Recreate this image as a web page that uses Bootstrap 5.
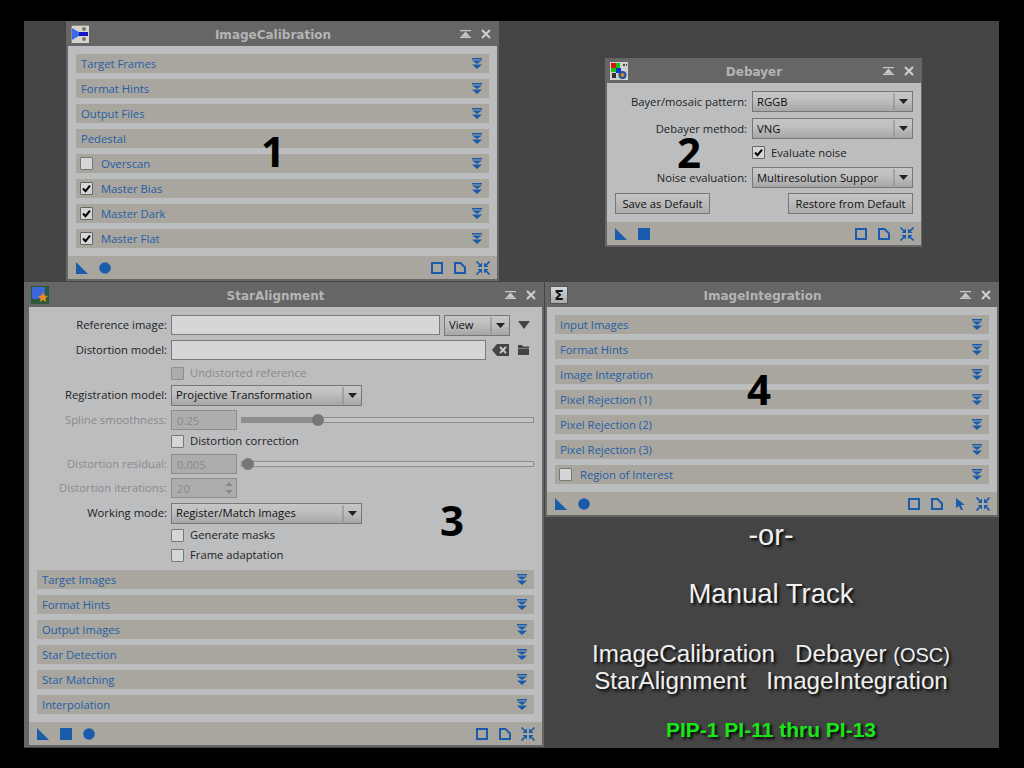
<!DOCTYPE html>
<html lang="en">
<head>
<meta charset="utf-8">
<title>Processes</title>
<link href="https://cdn.jsdelivr.net/npm/bootstrap@5.3.0/dist/css/bootstrap.min.css" rel="stylesheet">
<style>
html,body{background:#000;margin:0;height:768px;overflow:hidden}
body{font-family:"Open Sans","Liberation Sans",sans-serif;font-size:11.25px;line-height:1;color:#222}
.pi-desk{position:relative;width:975px;height:727px;margin:21px 0 0 24px;background:#444}
.pi-win{position:absolute;background:#666;padding:0 2px 2px}
#w1{left:42px;top:0;width:433px}
#w2{left:581px;top:37px;width:317px;padding-right:1px}
#w3{left:0;top:261px;width:520px;padding-left:5px}
#w4{left:521px;top:261px;width:454px}
.pi-title{height:25px;margin:0 -2px;padding:0 3px 0 5px}
#w2 .pi-title{margin-right:-1px}
#w3 .pi-title{margin-left:-5px;padding-left:7px}
.pi-title-text{font:bold 12px "DejaVu Sans",sans-serif;color:#b4b4b4;padding:2px 3px 0 0}
.pi-title-btns{gap:10px;width:36px}
.pi-appicon{width:18px;height:18px;display:block}
.pi-body{background:#bcbdbf;padding:8px}
.pi-bars{gap:6px}
.pi-bar{height:19px;background:#a8a69f;color:#265ea6;padding:0 7px 0 5px}
.pi-bar-text{line-height:19px;margin-top:-1px}
.pi-chev{width:10px;height:11px;color:#1a5cab;display:block}
.form-check-input.pi-chk{width:13px;height:13px;border-radius:1px;border:1px solid #777;background-color:#d6d6d6;margin-top:0;flex:none;box-shadow:none;opacity:1}
.pi-bar .form-check-input.pi-chk{margin:-1px 8px 0 -1px}
.form-check-input.pi-chk:checked{background-color:#d6d6d6;border-color:#666;background-size:11px 11px;background-image:url("data:image/svg+xml,%3Csvg xmlns='http://www.w3.org/2000/svg' viewBox='0 0 11 11'%3E%3Cpath d='M2 5.500l2.500 2.700L9 2.600' fill='none' stroke='%23000' stroke-width='2'/%3E%3C/svg%3E")}
.form-check-input.pi-chk:disabled{background-color:#adadad;border-color:#8c8c8c}
.pi-cklbl{padding-left:6px}
.pi-foot{height:23px;background:#a8a69f;padding:0 7px 0 8px;color:#1a5cab}
.pi-foot svg{display:block;width:12px;height:12px}
.pi-foot .pi-wide{width:14px;height:14px;margin-left:-1px}
.pi-fgap{gap:11px}
.pi-lbl{width:134px;padding:0 4px 0 0;text-align:right;flex:none}
.pi-lbl2{width:137px;padding:0 5px 0 0;text-align:right;flex:none}
.pi-off{color:#8a8a8a}
.pi-row{height:20px}
.g1{margin-top:1px}.g2{margin-top:2px}.g3{margin-top:3px}.g4{margin-top:4px}.g5{margin-top:5px}.g6{margin-top:6px}.g7{margin-top:7px}.g8{margin-top:8px}
.form-control.pi-input{height:20px;min-height:0;padding:0 5px;border-radius:0;border:1px solid #7b7b7b;background:#d6d6d6;font-size:11.25px;box-shadow:none}
.form-select.pi-sel{height:21px;padding:0 24px 0 4px;border-radius:0;border:1px solid #777;font-size:11.25px;line-height:18px;color:#111;box-shadow:none;
background-color:#b4b4b4;
background-image:url("data:image/svg+xml,%3Csvg xmlns='http://www.w3.org/2000/svg' width='20' height='19'%3E%3Cpath d='M2 1v17' stroke='%23858585'/%3E%3Cpath d='M7 7h9l-4.500 5z' fill='%23222'/%3E%3C/svg%3E"),linear-gradient(#c6c6c6,#c0c0c0 40%,#a6a6a6);
background-position:right 0 center,0 0;background-size:20px 19px,100% 100%;background-repeat:no-repeat}
.pi-w-reg{width:191px}
.pi-w-view{width:66px;margin-left:4px}
.pi-w-ref{width:269px}
.pi-w-dist{width:315px}
.pi-w-deb{width:161px}
.pi-spinwrap{position:relative;width:66px;flex:none}
.form-control.pi-dis{background:#adadad;color:#8a8a8a;border-color:#8c8c8c;opacity:1;width:66px}
.pi-spin{position:absolute;right:3px;top:2px;width:10px;height:16px;color:#8a8a8a;display:block}
.pi-range{-webkit-appearance:none;appearance:none;width:293px;height:6px;margin:0 0 0 4px;border:1px solid #8f8f8f;background:#c4c4c4;display:block;padding:0}
.pi-range::-webkit-slider-thumb{-webkit-appearance:none;appearance:none;width:12px;height:12px;border-radius:50%;background:#777;border:0}
.pi-fill{background:linear-gradient(to right,#8e8e8e 75px,#c4c4c4 75px)}
.pi-ic{color:#444;display:block}
.pi-tri{margin-left:8px;width:12px;height:8px}
.pi-del{margin-left:6px;width:17px;height:12px}
.pi-fold{margin-left:9px;width:11px;height:10px}
.btn.pi-btn{height:21px;padding:0 4px;font-size:11.25px;line-height:18px;border-radius:0;border:1px solid #777;background:linear-gradient(#c6c6c6,#acacac);color:#111;white-space:nowrap}
.pi-b1{width:95px}
.pi-b2{width:125px}
.pi-num{position:absolute;font:bold 42px/30px "Open Sans",sans-serif;color:#000}
#n1{left:195px;top:115px}
#n2{left:72px;top:79px}
#n3{left:416px;top:223px}
#n4{left:202px;top:92px}
.pi-sigma{width:18px;height:18px;background:linear-gradient(#d6d6e0,#aaa);border:1px solid #555;color:#111;font:bold 14px/16px "DejaVu Sans",sans-serif;text-align:center}
.pi-cap{position:absolute;left:520px;top:500px;width:454px;color:#f0f0f0;font-family:"Liberation Sans",sans-serif;text-align:center;text-shadow:2px 2px 3px #000}
.pi-or{font-size:29px;line-height:28px}
.pi-manual{font-size:27.5px;line-height:32px;margin-top:29px}
.pi-tools{font-size:24.2px;line-height:27px;margin-top:30px}
.pi-tools small{font-size:20px;line-height:20px}
.pi-green{font-size:21px;line-height:26px;margin-top:23px;font-weight:bold;color:#19e619}
</style>
</head>
<body>
<svg class="d-none" xmlns="http://www.w3.org/2000/svg">
  <symbol id="chev" viewBox="0 0 10 11"><path d="M0 0h10v1.500H0zM0 2.500h10L5 6zM0 6.500h10L5 11z" fill="currentColor"/></symbol>
  <symbol id="tri" viewBox="0 0 12 12"><path d="M0 0l12 12H0z" fill="currentColor"/></symbol>
  <symbol id="dot" viewBox="0 0 12 12"><circle cx="6" cy="6" r="5.800" fill="currentColor"/></symbol>
  <symbol id="sq" viewBox="0 0 12 12"><path d="M0 0h12v12H0z" fill="currentColor"/></symbol>
  <symbol id="box" viewBox="0 0 12 12"><path d="M1 1h10v10H1z" fill="none" stroke="currentColor" stroke-width="2"/></symbol>
  <symbol id="doc" viewBox="0 0 12 12"><path d="M1 1h5.500L11 5.500V11H1z" fill="none" stroke="currentColor" stroke-width="2"/></symbol>
  <symbol id="arrow" viewBox="0 0 12 12"><path d="M2 0l9 7H7l2 5-2 0-2-4-3 2z" fill="currentColor"/></symbol>
  <symbol id="shrink" viewBox="0 0 14 14"><g fill="none" stroke="currentColor" stroke-width="1.600"><path d="M0.500 0.500l4.500 4.500M13.500 0.500L9 5M0.500 13.500L5 9M13.500 13.500L9 9"/></g><path d="M6 1.500v4.500H1.500zM8 1.500v4.500h4.500zM6 12.500V8H1.500zM8 12.500V8h4.500z" fill="currentColor"/></symbol>
  <symbol id="pin" viewBox="0 0 11 8"><path d="M0 0h11v1.200H0zM5.500 1.500L10 6.500H1zM0 6.800h11V8H0z" fill="#c8c8c8"/></symbol>
  <symbol id="close" viewBox="0 0 10 10"><path d="M1 1l8 8M9 1l-8 8" stroke="#d0d0d0" stroke-width="2"/></symbol>
  <symbol id="ic1" viewBox="0 0 18 18"><path d="M0 0h18v18H0z" fill="#d8d4cc"/><path d="M0 0v18M0 0h18" stroke="#444"/><path d="M1 3l10 6-10 6z" fill="#3a6ae8"/><path d="M8 7h9v4H8z" fill="#1414c8"/><circle cx="13" cy="4" r="2" fill="#777"/><circle cx="13" cy="14" r="2" fill="#777"/></symbol>
  <symbol id="ic2" viewBox="0 0 18 18"><path d="M0 0h18v18H0z" fill="#d0d0d0"/><path d="M1 1h5v5H1z" fill="#e01010"/><path d="M6 1h4v5H6zM1 6h5v4H1z" fill="#10c810"/><path d="M6 6h5v5H6z" fill="#1030d0"/><path d="M2 11h4v5H2z" fill="#333"/><circle cx="12.500" cy="13" r="4" fill="#2050a0"/><circle cx="12.500" cy="13" r="2" fill="#c89020"/><path d="M13 2h2v2h-2zM16 2h1v2h-1z" fill="#444"/></symbol>
  <symbol id="ic3" viewBox="0 0 18 18"><path d="M0 0h18v18H0z" fill="#2c5a38"/><path d="M1 1h13v12H1z" fill="#3e66d8"/><path d="M12 6l1.500 3.500L17 10l-2.600 2.400.8 3.600-3.200-2-3.200 2 .8-3.600L7 10l3.500-.5z" fill="#e88a20"/></symbol>
</svg>

<main class="pi-desk">

  <section class="pi-win" id="w1">
    <div class="pi-title d-flex align-items-center">
      <svg class="pi-appicon"><use href="#ic1"/></svg>
      <div class="pi-title-text flex-grow-1 text-center">ImageCalibration</div>
      <div class="pi-title-btns d-flex align-items-center"><svg width="11" height="8"><use href="#pin"/></svg><svg width="10" height="10"><use href="#close"/></svg></div>
    </div>
    <div class="pi-body d-flex flex-column pi-bars">
      <div class="pi-bar d-flex align-items-center justify-content-between"><span class="pi-bar-text">Target Frames</span><svg class="pi-chev"><use href="#chev"/></svg></div>
      <div class="pi-bar d-flex align-items-center justify-content-between"><span class="pi-bar-text">Format Hints</span><svg class="pi-chev"><use href="#chev"/></svg></div>
      <div class="pi-bar d-flex align-items-center justify-content-between"><span class="pi-bar-text">Output Files</span><svg class="pi-chev"><use href="#chev"/></svg></div>
      <div class="pi-bar d-flex align-items-center justify-content-between"><span class="pi-bar-text">Pedestal</span><svg class="pi-chev"><use href="#chev"/></svg></div>
      <div class="pi-bar d-flex align-items-center"><input class="form-check-input pi-chk" type="checkbox" aria-label="Overscan"><span class="pi-bar-text flex-grow-1">Overscan</span><svg class="pi-chev"><use href="#chev"/></svg></div>
      <div class="pi-bar d-flex align-items-center"><input class="form-check-input pi-chk" type="checkbox" checked aria-label="Master Bias"><span class="pi-bar-text flex-grow-1">Master Bias</span><svg class="pi-chev"><use href="#chev"/></svg></div>
      <div class="pi-bar d-flex align-items-center"><input class="form-check-input pi-chk" type="checkbox" checked aria-label="Master Dark"><span class="pi-bar-text flex-grow-1">Master Dark</span><svg class="pi-chev"><use href="#chev"/></svg></div>
      <div class="pi-bar d-flex align-items-center"><input class="form-check-input pi-chk" type="checkbox" checked aria-label="Master Flat"><span class="pi-bar-text flex-grow-1">Master Flat</span><svg class="pi-chev"><use href="#chev"/></svg></div>
    </div>
    <div class="pi-foot d-flex align-items-center justify-content-between">
      <div class="d-flex pi-fgap align-items-center"><svg><use href="#tri"/></svg><svg><use href="#dot"/></svg></div>
      <div class="d-flex pi-fgap align-items-center"><svg><use href="#box"/></svg><svg><use href="#doc"/></svg><svg class="pi-wide"><use href="#shrink"/></svg></div>
    </div>
    <div class="pi-num" id="n1">1</div>
  </section>

  <section class="pi-win" id="w2">
    <div class="pi-title d-flex align-items-center">
      <svg class="pi-appicon"><use href="#ic2"/></svg>
      <div class="pi-title-text flex-grow-1 text-center">Debayer</div>
      <div class="pi-title-btns d-flex align-items-center"><svg width="11" height="8"><use href="#pin"/></svg><svg width="10" height="10"><use href="#close"/></svg></div>
    </div>
    <div class="pi-body">
      <div class="d-flex align-items-center"><label class="pi-lbl2">Bayer/mosaic pattern:</label><select class="form-select pi-sel pi-w-deb" aria-label="Bayer/mosaic pattern"><option>RGGB</option></select></div>
      <div class="d-flex align-items-center g6"><label class="pi-lbl2">Debayer method:</label><select class="form-select pi-sel pi-w-deb" aria-label="Debayer method"><option>VNG</option></select></div>
      <div class="d-flex align-items-center g7"><span class="pi-lbl2"></span><input class="form-check-input pi-chk" type="checkbox" checked id="ev"><label for="ev" class="pi-cklbl">Evaluate noise</label></div>
      <div class="d-flex align-items-center g8"><label class="pi-lbl2">Noise evaluation:</label><select class="form-select pi-sel pi-w-deb" aria-label="Noise evaluation"><option>Multiresolution Suppor</option></select></div>
      <div class="d-flex justify-content-between g5"><button class="btn pi-btn pi-b1" type="button">Save as Default</button><button class="btn pi-btn pi-b2" type="button">Restore from Default</button></div>
    </div>
    <div class="pi-foot d-flex align-items-center justify-content-between">
      <div class="d-flex pi-fgap align-items-center"><svg><use href="#tri"/></svg><svg><use href="#sq"/></svg></div>
      <div class="d-flex pi-fgap align-items-center"><svg><use href="#box"/></svg><svg><use href="#doc"/></svg><svg class="pi-wide"><use href="#shrink"/></svg></div>
    </div>
    <div class="pi-num" id="n2">2</div>
  </section>

  <section class="pi-win" id="w3">
    <div class="pi-title d-flex align-items-center">
      <svg class="pi-appicon"><use href="#ic3"/></svg>
      <div class="pi-title-text flex-grow-1 text-center">StarAlignment</div>
      <div class="pi-title-btns d-flex align-items-center"><svg width="11" height="8"><use href="#pin"/></svg><svg width="10" height="10"><use href="#close"/></svg></div>
    </div>
    <div class="pi-body">
      <div class="pi-row d-flex align-items-center"><label class="pi-lbl">Reference image:</label><input class="form-control pi-input pi-w-ref" type="text" aria-label="Reference image"><select class="form-select pi-sel pi-w-view" aria-label="Target"><option>View</option></select><svg class="pi-ic pi-tri" viewBox="0 0 12 8"><path d="M0 0h12L6 8z" fill="currentColor"/></svg></div>
      <div class="pi-row d-flex align-items-center g5"><label class="pi-lbl">Distortion model:</label><input class="form-control pi-input pi-w-dist" type="text" aria-label="Distortion model"><svg class="pi-ic pi-del" viewBox="0 0 17 12"><path d="M5 0h12v12H5L0 6z" fill="currentColor"/><path d="M8 3l6 6M14 3l-6 6" stroke="#c8c8c8" stroke-width="2"/></svg><svg class="pi-ic pi-fold" viewBox="0 0 11 10"><path d="M0 0h4l1 1.500h6V3H0zM0 3.500h11V10H0z" fill="currentColor"/></svg></div>
      <div class="pi-row d-flex align-items-center g3"><span class="pi-lbl"></span><input class="form-check-input pi-chk" type="checkbox" disabled id="ud"><label for="ud" class="pi-cklbl pi-off">Undistorted reference</label></div>
      <div class="pi-row d-flex align-items-center g2"><label class="pi-lbl">Registration model:</label><select class="form-select pi-sel pi-w-reg" aria-label="Registration model"><option>Projective Transformation</option></select></div>
      <div class="pi-row d-flex align-items-center g5"><label class="pi-lbl pi-off">Spline smoothness:</label><div class="pi-spinwrap"><input class="form-control pi-input pi-dis" type="text" value="0.25" disabled aria-label="Spline smoothness"></div><input class="pi-range pi-fill" type="range" min="0" max="100" value="25" disabled aria-label="Spline smoothness slider"></div>
      <div class="pi-row d-flex align-items-center g1"><span class="pi-lbl"></span><input class="form-check-input pi-chk" type="checkbox" id="dc"><label for="dc" class="pi-cklbl">Distortion correction</label></div>
      <div class="pi-row d-flex align-items-center g3"><label class="pi-lbl pi-off">Distortion residual:</label><div class="pi-spinwrap"><input class="form-control pi-input pi-dis" type="text" value="0.005" disabled aria-label="Distortion residual"></div><input class="pi-range" type="range" min="0" max="100" value="0" disabled aria-label="Distortion residual slider"></div>
      <div class="pi-row d-flex align-items-center g4"><label class="pi-lbl pi-off">Distortion iterations:</label><div class="pi-spinwrap"><input class="form-control pi-input pi-dis" type="text" value="20" disabled aria-label="Distortion iterations"><svg class="pi-spin" viewBox="0 0 10 16"><path d="M5 2l4 4H1zM5 14l4-4H1z" fill="currentColor"/></svg></div></div>
      <div class="pi-row d-flex align-items-center g5"><label class="pi-lbl">Working mode:</label><select class="form-select pi-sel pi-w-reg" aria-label="Working mode"><option>Register/Match Images</option></select></div>
      <div class="pi-row d-flex align-items-center g2"><span class="pi-lbl"></span><input class="form-check-input pi-chk" type="checkbox" id="gm"><label for="gm" class="pi-cklbl">Generate masks</label></div>
      <div class="pi-row d-flex align-items-center"><span class="pi-lbl"></span><input class="form-check-input pi-chk" type="checkbox" id="fa"><label for="fa" class="pi-cklbl">Frame adaptation</label></div>
      <div class="d-flex flex-column pi-bars g5">
        <div class="pi-bar d-flex align-items-center justify-content-between"><span class="pi-bar-text">Target Images</span><svg class="pi-chev"><use href="#chev"/></svg></div>
        <div class="pi-bar d-flex align-items-center justify-content-between"><span class="pi-bar-text">Format Hints</span><svg class="pi-chev"><use href="#chev"/></svg></div>
        <div class="pi-bar d-flex align-items-center justify-content-between"><span class="pi-bar-text">Output Images</span><svg class="pi-chev"><use href="#chev"/></svg></div>
        <div class="pi-bar d-flex align-items-center justify-content-between"><span class="pi-bar-text">Star Detection</span><svg class="pi-chev"><use href="#chev"/></svg></div>
        <div class="pi-bar d-flex align-items-center justify-content-between"><span class="pi-bar-text">Star Matching</span><svg class="pi-chev"><use href="#chev"/></svg></div>
        <div class="pi-bar d-flex align-items-center justify-content-between"><span class="pi-bar-text">Interpolation</span><svg class="pi-chev"><use href="#chev"/></svg></div>
      </div>
    </div>
    <div class="pi-foot d-flex align-items-center justify-content-between">
      <div class="d-flex pi-fgap align-items-center"><svg><use href="#tri"/></svg><svg><use href="#sq"/></svg><svg><use href="#dot"/></svg></div>
      <div class="d-flex pi-fgap align-items-center"><svg><use href="#box"/></svg><svg><use href="#doc"/></svg><svg class="pi-wide"><use href="#shrink"/></svg></div>
    </div>
    <div class="pi-num" id="n3">3</div>
  </section>

  <section class="pi-win" id="w4">
    <div class="pi-title d-flex align-items-center">
      <div class="pi-sigma">Σ</div>
      <div class="pi-title-text flex-grow-1 text-center">ImageIntegration</div>
      <div class="pi-title-btns d-flex align-items-center"><svg width="11" height="8"><use href="#pin"/></svg><svg width="10" height="10"><use href="#close"/></svg></div>
    </div>
    <div class="pi-body d-flex flex-column pi-bars">
      <div class="pi-bar d-flex align-items-center justify-content-between"><span class="pi-bar-text">Input Images</span><svg class="pi-chev"><use href="#chev"/></svg></div>
      <div class="pi-bar d-flex align-items-center justify-content-between"><span class="pi-bar-text">Format Hints</span><svg class="pi-chev"><use href="#chev"/></svg></div>
      <div class="pi-bar d-flex align-items-center justify-content-between"><span class="pi-bar-text">Image Integration</span><svg class="pi-chev"><use href="#chev"/></svg></div>
      <div class="pi-bar d-flex align-items-center justify-content-between"><span class="pi-bar-text">Pixel Rejection (1)</span><svg class="pi-chev"><use href="#chev"/></svg></div>
      <div class="pi-bar d-flex align-items-center justify-content-between"><span class="pi-bar-text">Pixel Rejection (2)</span><svg class="pi-chev"><use href="#chev"/></svg></div>
      <div class="pi-bar d-flex align-items-center justify-content-between"><span class="pi-bar-text">Pixel Rejection (3)</span><svg class="pi-chev"><use href="#chev"/></svg></div>
      <div class="pi-bar d-flex align-items-center"><input class="form-check-input pi-chk" type="checkbox" aria-label="Region of Interest"><span class="pi-bar-text flex-grow-1">Region of Interest</span><svg class="pi-chev"><use href="#chev"/></svg></div>
    </div>
    <div class="pi-foot d-flex align-items-center justify-content-between">
      <div class="d-flex pi-fgap align-items-center"><svg><use href="#tri"/></svg><svg><use href="#dot"/></svg></div>
      <div class="d-flex pi-fgap align-items-center"><svg><use href="#box"/></svg><svg><use href="#doc"/></svg><svg><use href="#arrow"/></svg><svg class="pi-wide"><use href="#shrink"/></svg></div>
    </div>
    <div class="pi-num" id="n4">4</div>
  </section>

  <div class="pi-cap">
    <div class="pi-or">-or-</div>
    <div class="pi-manual">Manual Track</div>
    <div class="pi-tools">ImageCalibration &nbsp; Debayer <small>(OSC)</small><br>StarAlignment &nbsp; ImageIntegration</div>
    <div class="pi-green">PIP-1 PI-11 thru PI-13</div>
  </div>

</main>
<script src="https://cdn.jsdelivr.net/npm/bootstrap@5.3.0/dist/js/bootstrap.bundle.min.js"></script>
</body>
</html>
